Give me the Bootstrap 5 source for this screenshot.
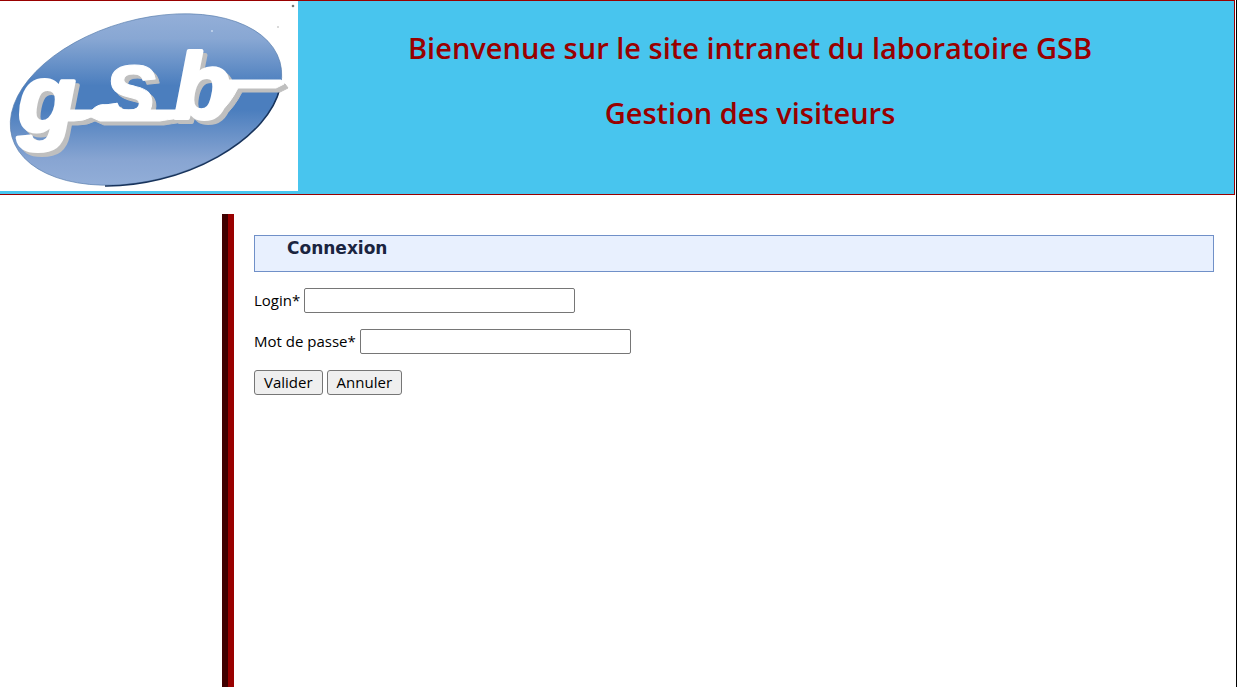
<!DOCTYPE html>
<html lang="fr">
<head>
<meta charset="utf-8">
<meta name="viewport" content="width=device-width, initial-scale=1">
<title>Intranet du laboratoire GSB</title>
<link rel="stylesheet" href="https://cdn.jsdelivr.net/npm/bootstrap@5.3.0/dist/css/bootstrap.min.css">
<style>
  body { font-family: "Trebuchet MS", "Open Sans", sans-serif; font-size: 15px; line-height: 20px; color: #000; background: #fff; }
  .page { border-right: 1px solid #000; padding-right: 1px; }
  .banner { background: #48c5ee; border: 1px solid #900; border-left: 0; padding-bottom: 3px; margin-bottom: 19px; }
  .banner-logo { width: 298px; height: 190px; }
  .banner-titles { padding: 27px 32px 0 0; }
  .banner-titles h1 { font-size: 29px; line-height: 40px; font-weight: 600; color: #900; margin-bottom: 25px; }
  .side { width: 222px; }
  .content-area { border-left: 6px solid #400000; padding: 0; }
  .content-inner { border-left: 6px solid #900; padding: 21px 21px 0 20px; }
  .section-title { font-family: Verdana, "DejaVu Sans", sans-serif; font-size: 17px; line-height: 24px; font-weight: 700; color: #1a2440; background: #e8f0fe; border: 1px solid #7090c8; padding: 0 32px 11px; margin-bottom: 16px; }
  .field-row label { padding-bottom: 2px; }
  .field { width: 271px; height: 25px; border: 1px solid #767676; border-radius: 2px; padding: 1px 2px; }
  .btn-plain { height: 25px; border: 1px solid #767676; border-radius: 3px; background: #efefef; color: #000; padding: 0 9px 1px; }
</style>
</head>
<body>
<div class="page min-vh-100 d-flex flex-column">
  <header class="banner d-flex">
    <svg class="banner-logo flex-shrink-0" viewBox="0 1 298 190" role="img" aria-label="Logo GSB">
      <defs>
        <linearGradient id="blue" gradientUnits="userSpaceOnUse" x1="0" y1="13" x2="0" y2="186">
          <stop offset="0" stop-color="#94afd8"/><stop offset=".15" stop-color="#88a7d3"/>
          <stop offset=".42" stop-color="#4b7ebe"/><stop offset=".56" stop-color="#4b7ebe"/>
          <stop offset=".85" stop-color="#88a5d2"/><stop offset="1" stop-color="#92aed8"/>
        </linearGradient>
        <g id="logo-script" font-family="Liberation Sans" font-weight="700" font-style="italic" stroke-linejoin="round">
          <text x="18" y="131" font-size="94" stroke-width="4">g</text>
          <text x="104" y="118" font-size="98" stroke-width="1">s</text>
          <text x="174" y="118" font-size="92" stroke-width="4">b</text>
          <path d="M68 110H92Q99 103 107 105L121 110H180V118Q165 120 160 121H100L91 117Q84 121 74 121H66Z"/>
          <path d="M218 82Q223 80 230 80H281L284 84L276 88H238Q230 104 219 113L210 117L222 101Z"/>
        </g>
      </defs>
      <rect y="1" width="298" height="190" fill="#fff"/>
      <path d="M12 137A139 80 -15.6 0 1 280 62A139 80 -15.6 0 1 12 137Z" fill="url(#blue)" stroke="#597eae" stroke-width=".7"/>
      <path d="M105 186A139 80 -15.6 0 0 280 88" fill="none" stroke="#17335c" stroke-width="1.5"/>
      <use href="#logo-script" x="4" y="4" fill="#bfbfbf" stroke="#bfbfbf"/>
      <use href="#logo-script" fill="#fff" stroke="#fff"/>
      <circle cx="293" cy="6" r="1.3" fill="#777"/><circle cx="278" cy="27" r=".8" fill="#aaa"/><circle cx="212" cy="31" r="1" fill="#c7d8ee"/>
    </svg>
    <div class="banner-titles flex-grow-1 text-center">
      <h1>Bienvenue sur le site intranet du laboratoire GSB</h1>
      <h1 class="mb-0">Gestion des visiteurs</h1>
    </div>
  </header>
  <div class="d-flex flex-grow-1">
    <aside class="side flex-shrink-0"></aside>
    <main class="content-area flex-grow-1 d-flex">
      <div class="content-inner flex-grow-1">
        <h2 class="section-title">Connexion</h2>
        <form>
          <div class="field-row d-flex align-items-center gap-1 mb-3">
            <label for="login">Login*</label>
            <input class="field" id="login" type="text">
          </div>
          <div class="field-row d-flex align-items-center gap-1 mb-3">
            <label for="mdp">Mot de passe*</label>
            <input class="field" id="mdp" type="password">
          </div>
          <div class="d-flex gap-1">
            <button class="btn-plain" type="submit">Valider</button>
            <button class="btn-plain" type="reset">Annuler</button>
          </div>
        </form>
      </div>
    </main>
  </div>
</div>
<script src="https://cdn.jsdelivr.net/npm/bootstrap@5.3.0/dist/js/bootstrap.bundle.min.js"></script>
</body>
</html>
